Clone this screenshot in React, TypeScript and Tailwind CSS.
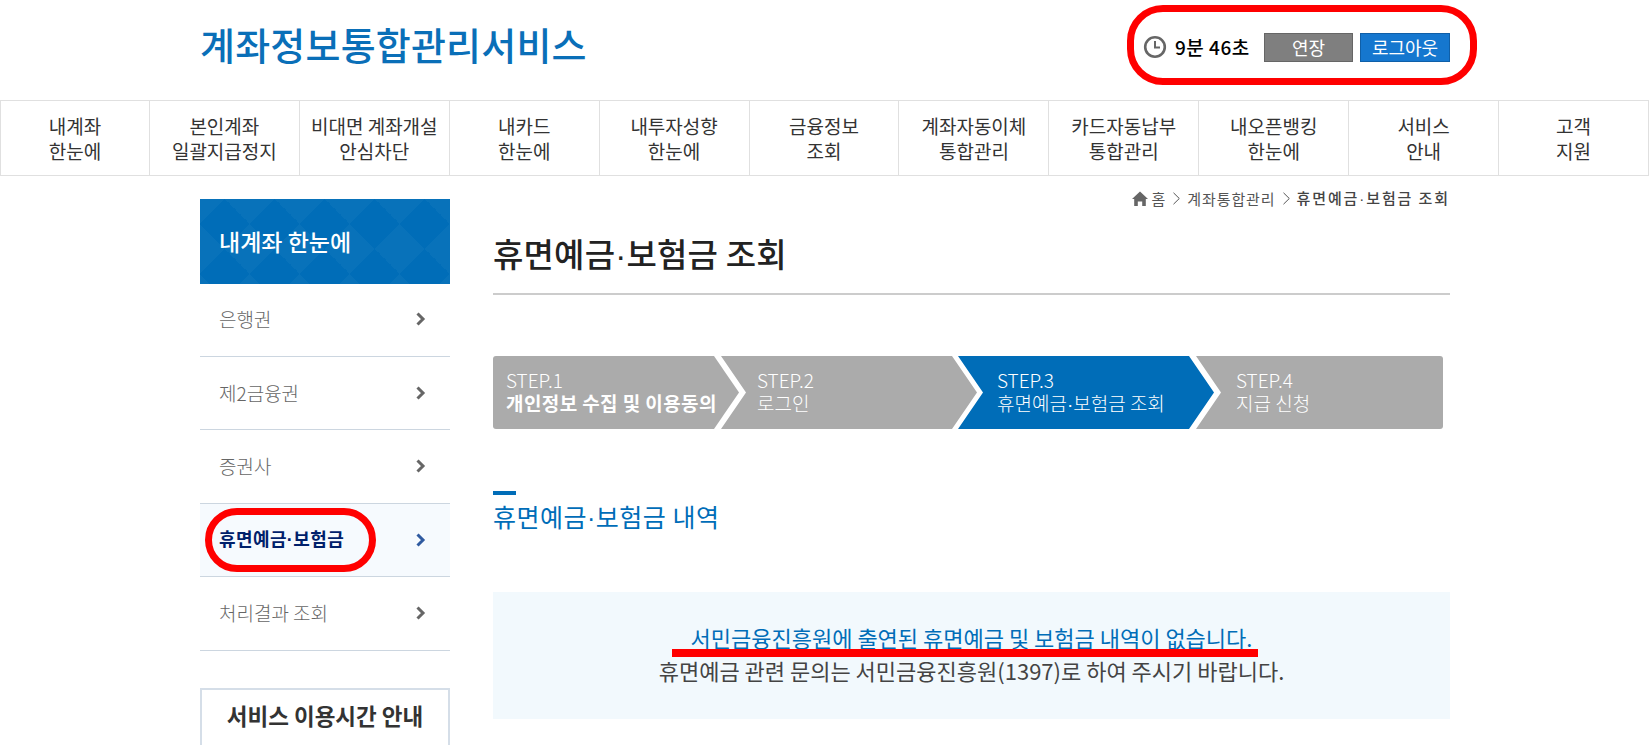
import React from "react";

const navItems = [
  ["내계좌", "한눈에"],
  ["본인계좌", "일괄지급정지"],
  ["비대면 계좌개설", "안심차단"],
  ["내카드", "한눈에"],
  ["내투자성향", "한눈에"],
  ["금융정보", "조회"],
  ["계좌자동이체", "통합관리"],
  ["카드자동납부", "통합관리"],
  ["내오픈뱅킹", "한눈에"],
  ["서비스", "안내"],
  ["고객", "지원"],
];

const sideItems = ["은행권", "제2금융권", "증권사", "휴면예금·보험금", "처리결과 조회"];

// the middle dot in the CJK font is far too wide, so it gets a latin one
const Dotted: React.FC<{ text: string }> = ({ text }) => {
  const [a, b] = text.split("·");
  return (
    <>
      {a}
      <span className="font-['Liberation_Sans']">·</span>
      {b}
    </>
  );
};

const SideArrow: React.FC<{ color: string }> = ({ color }) => (
  <svg width="10" height="14" viewBox="0 0 10 14" fill="none" stroke={color} strokeWidth="3">
    <path d="M1.5 1.5 7 7l-5.5 5.5" />
  </svg>
);

const CrumbArrow = () => (
  <svg width="7" height="13" viewBox="0 0 7 13" fill="none" stroke="#555" strokeWidth="1">
    <path d="M.5.8 6.3 6.5.5 12.2" />
  </svg>
);

const App: React.FC = () => {
  return (
    <div className="relative h-[745px] overflow-hidden bg-white font-['Noto_Sans_CJK_KR','Noto_Sans',sans-serif] text-[#333]">
      {/* header */}
      <header className="flex h-[100px] items-center justify-between pl-[200px] pr-[199px]">
        <h1 className="pb-[12px] text-[38px] font-medium leading-none tracking-[0.2px] text-[#0a6fb8]">계좌정보통합관리서비스</h1>
        <div className="relative flex items-center pb-[6px]">
          <svg width="24" height="24" viewBox="0 0 24 24" className="mr-[8px]">
            <circle cx="12" cy="12" r="9.8" fill="none" stroke="#666" strokeWidth="2.6" />
            <path d="M12 6v6.5h5" fill="none" stroke="#666" strokeWidth="2" />
          </svg>
          <span className="mr-[14px] w-[75px] whitespace-nowrap text-[19px] font-medium tracking-[0.5px] text-black">9분 46초</span>
          <button className="mr-[7px] h-[29px] w-[89px] border border-[#666] bg-[#7f7f7f] text-[18px] leading-none text-white">연장</button>
          <button className="h-[29px] w-[90px] border border-[#0f5fa8] bg-[#1577cf] text-[18px] leading-none text-white">로그아웃</button>
          <div className="absolute left-[-16px] top-[-28px] h-[80px] w-[350px] rounded-[36px] border-[7px] border-[#ff0000]" />
        </div>
      </header>

      {/* nav */}
      <nav className="grid h-[76px] grid-cols-11 border-y border-[#e0e0e0]">
        {navItems.map((item, i) => (
          <div key={i} className="flex flex-col items-center justify-center border-r border-[#e0e0e0] text-[19px] leading-[25px] text-[#333] first:border-l">
            <span>{item[0]}</span>
            <span>{item[1]}</span>
          </div>
        ))}
      </nav>

      <main className="flex pl-[200px] pt-[23px]">
        {/* sidebar */}
        <aside className="w-[250px] shrink-0">
          <div className="flex h-[85px] items-center bg-[#006db8] bg-[linear-gradient(45deg,#0872ba_25%,transparent_25%),linear-gradient(-45deg,#0872ba_25%,transparent_25%),linear-gradient(135deg,#0872ba_25%,transparent_25%),linear-gradient(-135deg,#0872ba_25%,transparent_25%)] bg-[length:50px_50px] pl-[19px] text-[23px] font-medium text-white">
            내계좌 한눈에
          </div>
          <ul className="mt-[-1px]">
            {sideItems.map((item, i) =>
              i === 3 ? (
                <li key={item} className="relative flex h-[73.5px] items-center justify-between border-b border-[#ccd6e0] bg-[#f6fafe] pl-[19px] pr-[24px] text-[18px] font-bold tracking-[0.4px] text-[#00206b]">
                  <span><Dotted text={item} /></span>
                  <SideArrow color="#2f5aa0" />
                  <div className="absolute left-[5px] top-[4px] h-[64px] w-[171px] rounded-full border-[7px] border-[#ff0000]" />
                </li>
              ) : (
                <li key={item} className="flex h-[73.5px] items-center justify-between border-b border-[#ccd6e0] pl-[19px] pr-[24px] text-[19px] font-light text-[#666]">
                  <span>{item}</span>
                  <SideArrow color="#666" />
                </li>
              )
            )}
          </ul>
          <div className="mt-[37px] flex h-[80px] justify-center border-2 border-[#d5dee8] pt-[9px] text-[22.5px] font-bold text-[#333]">
            서비스 이용시간 안내
          </div>
        </aside>

        {/* content */}
        <section className="ml-[43px] mt-[-11px] w-[957px]">
          <div className="flex h-[20px] items-center justify-end text-[15px] leading-none tracking-[0.9px] text-[#555]">
            <svg width="16" height="15" viewBox="0 0 16 15" fill="#666" className="mr-[4px]">
              <path d="M8 .5 16 8h-2.2v7h-3.6v-4.5H5.8V15H2.2V8H0z" />
            </svg>
            <span>홈</span>
            <span className="mx-[7px]"><CrumbArrow /></span>
            <span>계좌통합관리</span>
            <span className="mx-[7px]"><CrumbArrow /></span>
            <span className="font-medium tracking-[1.9px] text-[#444]"><Dotted text="휴면예금·보험금 조회" /></span>
          </div>

          <h2 className="mt-[23px] h-[64px] border-b-2 border-[#ccc] text-[33px] font-medium leading-[44px] tracking-[0.2px] text-[#222]"><Dotted text="휴면예금·보험금 조회" /></h2>

          <ol className="mt-[61px] flex h-[73px] w-[950px] overflow-hidden rounded-[3px] text-[19px] leading-[23px] text-white">
            <li className="w-[246px] shrink-0 bg-[#ababab] pl-[13px] pt-[12px] [clip-path:polygon(0_0,calc(100%-25px)_0,100%_50%,calc(100%-25px)_100%,0_100%)]">
              <p className="font-light">STEP.1</p>
              <p className="whitespace-nowrap font-bold tracking-[0.4px]">개인정보 수집 및 이용동의</p>
            </li>
            <li className="ml-[-18px] w-[256px] shrink-0 bg-[#ababab] pl-[36px] pt-[12px] [clip-path:polygon(0_0,calc(100%-25px)_0,100%_50%,calc(100%-25px)_100%,0_100%,25px_50%)]">
              <p className="font-light">STEP.2</p>
              <p className="font-light">로그인</p>
            </li>
            <li className="ml-[-19px] w-[256px] shrink-0 bg-[#006db8] pl-[39px] pt-[12px] [clip-path:polygon(0_0,calc(100%-25px)_0,100%_50%,calc(100%-25px)_100%,0_100%,25px_50%)]">
              <p className="font-light">STEP.3</p>
              <p className="whitespace-nowrap font-light"><Dotted text="휴면예금·보험금 조회" /></p>
            </li>
            <li className="ml-[-18px] w-[247px] shrink-0 bg-[#ababab] pl-[40px] pt-[12px] [clip-path:polygon(0_0,100%_0,100%_100%,0_100%,25px_50%)]">
              <p className="font-light">STEP.4</p>
              <p className="font-light">지급 신청</p>
            </li>
          </ol>

          <div className="mt-[62px] h-[4px] w-[23px] bg-[#006db8]" />
          <h3 className="mt-[3px] text-[25px] leading-[36px] tracking-[0.5px] text-[#006db8]"><Dotted text="휴면예금·보험금 내역" /></h3>

          <div className="relative mt-[56px] flex h-[127px] flex-col items-center justify-center bg-[#f2f9fd] pb-[3px] text-[22px] leading-[33px]">
            <p className="text-[#006db8]">서민금융진흥원에 출연된 휴면예금 및 보험금 내역이 없습니다.</p>
            <p className="text-[#444]">휴면예금 관련 문의는 서민금융진흥원(1397)로 하여 주시기 바랍니다.</p>
            <div className="absolute left-[179px] top-[57px] h-[8px] w-[586px] bg-[#ff0000]" />
          </div>
        </section>
      </main>
    </div>
  );
};

export default App;
